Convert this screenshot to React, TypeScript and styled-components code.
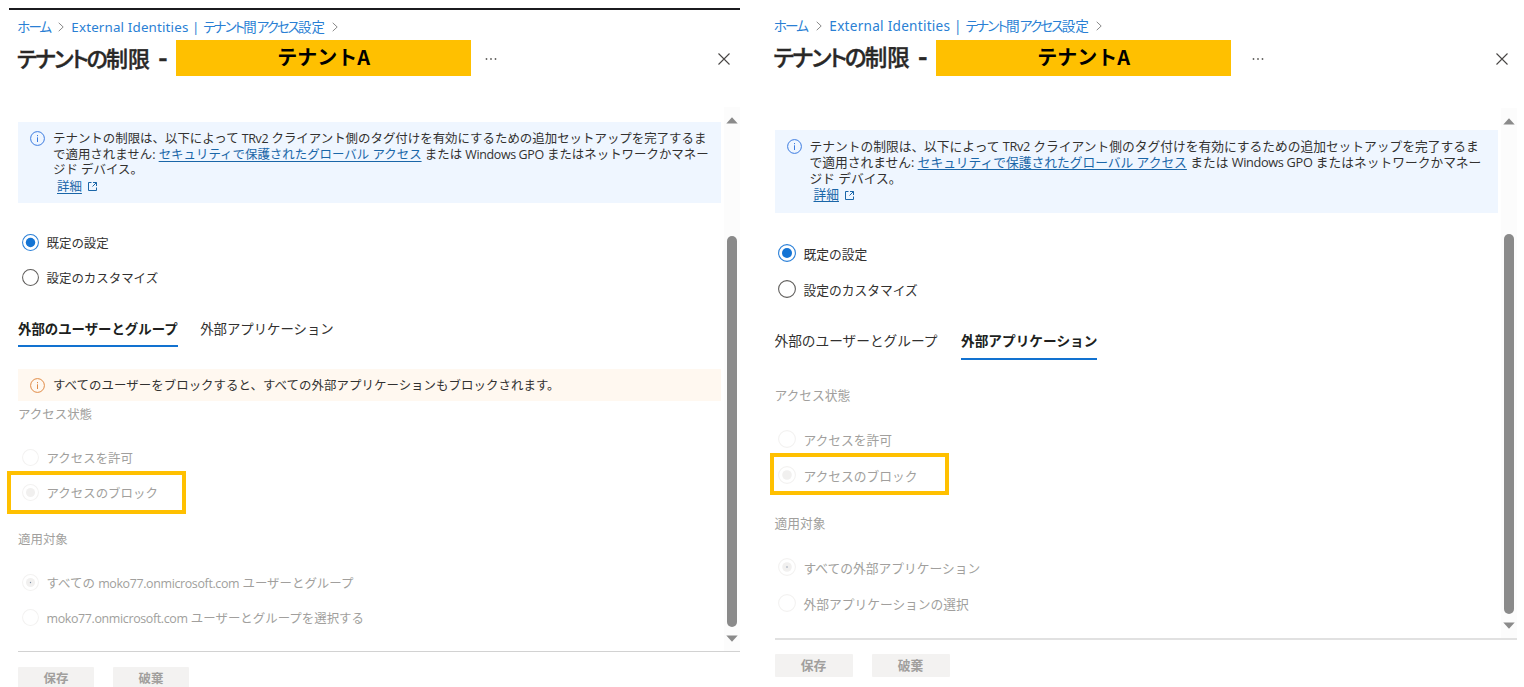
import React from "react";
import styled, { createGlobalStyle, ThemeProvider } from "styled-components";

const GlobalStyle = createGlobalStyle`
  * { box-sizing: border-box; }
  body {
    margin: 0;
    background: #fff;
    overflow: hidden;
    font-family: "Open Sans", "Noto Sans CJK JP", sans-serif;
    color: #323130;
  }
`;

interface PanelTheme {
  width: number;
  padLeft: number;
  padRight: number;
  text: number;
  textTop: number;
  labelTop: number;
  tab: number;
  tabGap: number;
  tabLine: number;
  crumb: number;
  crumbTop: number;
  crumbLatin: number;
  crumbKana: number;
  latin: number;
  radio: number;
  radioLeft: number;
  titleSize: number;
  titleTop: number;
  bannerLeft: number;
  moreGap: number;
  iconTop: number;
  scrollTop: number;
  scrollHeight: number;
  noticeTop: number;
  noticeHeight: number;
  noticeLine: number;
  thumbTop: number;
  thumbHeight: number;
  footerGap: number;
  buttonWidth: number;
  buttonHeight: number;
  buttonPad: number;
  ruleColor: string;
  ruleWidth: number;
}

declare module "styled-components" {
  export interface DefaultTheme extends PanelTheme {}
}

const leftTheme: PanelTheme = {
  width: 740, padLeft: 18, padRight: 0,
  text: 12.45, textTop: 4, labelTop: 1, tab: 13.4, tabGap: 22.5, tabLine: 26,
  crumb: 13.4, crumbTop: 17, crumbLatin: 0.15, crumbKana: -1.8,
  latin: -0.36, radio: 17, radioLeft: 3.5,
  titleSize: 22, titleTop: 3, bannerLeft: 158, moreGap: 14, iconTop: 1,
  scrollTop: 31, scrollHeight: 544, noticeTop: 15, noticeHeight: 81, noticeLine: 15.5,
  thumbTop: 129, thumbHeight: 391, footerGap: 15, buttonWidth: 76, buttonHeight: 24, buttonPad: 3,
  ruleColor: "#d2d2d2", ruleWidth: 1,
};

const rightTheme: PanelTheme = {
  width: 784, padLeft: 34.5, padRight: 7,
  text: 12.74, textTop: 1, labelTop: 0, tab: 13.68, tabGap: 23.5, tabLine: 24,
  crumb: 13.6, crumbTop: 16, crumbLatin: 0.26, crumbKana: -1.85,
  latin: -0.32, radio: 18, radioLeft: 3,
  titleSize: 22.5, titleTop: 4, bannerLeft: 161.5, moreGap: 21, iconTop: 1,
  scrollTop: 32, scrollHeight: 530, noticeTop: 22, noticeHeight: 83, noticeLine: 15.8,
  thumbTop: 126, thumbHeight: 380, footerGap: 14, buttonWidth: 78, buttonHeight: 23, buttonPad: 2,
  ruleColor: "#e1e1e1", ruleWidth: 2,
};

const Page = styled.main`
  display: flex;
  width: 1524px;
  height: 687px;
  overflow: hidden;
`;

const Panel = styled.section`
  position: relative;
  flex: none;
  display: flex;
  flex-direction: column;
  width: ${(p) => p.theme.width}px;
  height: 687px;
  padding-left: ${(p) => p.theme.padLeft}px;
  padding-right: ${(p) => p.theme.padRight}px;
  overflow: hidden;
`;

const TopRule = styled.div`
  position: absolute;
  top: 8px;
  left: 9px;
  right: 0;
  height: 2px;
  background: #1b1b1f;
`;

const Breadcrumb = styled.nav`
  flex: none;
  display: flex;
  align-items: center;
  height: 20px;
  margin-top: ${(p) => p.theme.crumbTop}px;
  margin-left: -0.7px;
  font: ${(p) => p.theme.crumb}px/20px "Noto Sans", "Noto Sans CJK JP", sans-serif;
  color: #2a7fd4;
  white-space: pre;
`;

const Crumb = styled.a<{ w: number }>`
  display: block;
  width: ${(p) => p.w}px;
  white-space: pre;
`;

const CrumbLatin = styled.span`
  letter-spacing: ${(p) => p.theme.crumbLatin}px;
`;

const CrumbKana = styled.span`
  letter-spacing: ${(p) => p.theme.crumbKana}px;
  font-feature-settings: "palt";
`;

const TitleKana = styled.span`
  letter-spacing: -1.95px;
  font-feature-settings: "palt";
`;

const TitleDash = styled.span`
  margin-left: 8.5px;
  font-size: 1.25em;
  font-weight: 600;
  line-height: 1;
`;

const ChevronIcon = styled.svg`
  flex: none;
  width: 6px;
  height: 10px;
  fill: none;
  stroke: #8a8a8a;
  stroke-width: 1;
`;

const TitleRow = styled.header`
  flex: none;
  display: flex;
  align-items: center;
  height: 36px;
  margin-top: ${(p) => p.theme.titleTop}px;
`;

const Title = styled.h1`
  flex: none;
  width: ${(p) => p.theme.bannerLeft}px;
  height: 36px;
  margin: 0;
  text-indent: -1px;
  font-size: ${(p) => p.theme.titleSize}px;
  line-height: 36px;
  font-weight: 500;
  -webkit-text-stroke: 0.4px #292827;
  color: #292827;
  white-space: pre;
`;

const TenantBanner = styled.div`
  flex: none;
  width: 295.4px;
  height: 36px;
  background: #ffc000;
  color: #000;
  text-align: center;
  font: 700 20px/34px "Noto Sans CJK JP", sans-serif;
`;

const MoreIcon = styled.svg`
  flex: none;
  width: 12px;
  height: 4px;
  margin-top: ${(p) => p.theme.iconTop * 2}px;
  margin-left: ${(p) => p.theme.moreGap}px;
  fill: #605e5c;
`;

const CloseIcon = styled.svg<{ inset: number }>`
  flex: none;
  width: 12px;
  height: 12px;
  margin-top: ${(p) => p.theme.iconTop * 2}px;
  margin-left: auto;
  margin-right: ${(p) => p.inset}px;
  fill: none;
  stroke: #484644;
  stroke-width: 1.1;
`;

const ScrollArea = styled.div`
  flex: none;
  display: flex;
  justify-content: space-between;
  height: ${(p) => p.theme.scrollHeight}px;
  margin-top: ${(p) => p.theme.scrollTop}px;
`;

const Content = styled.div`
  flex: 1;
  margin-right: 3px;
  font-size: ${(p) => p.theme.text}px;
`;

const Notice = styled.div`
  display: flex;
  height: ${(p) => p.theme.noticeHeight}px;
  margin-top: ${(p) => p.theme.noticeTop}px;
  padding: 9px 0 0 12px;
  background: #eff6ff;
`;

const Warning = styled.div`
  display: flex;
  align-items: center;
  height: 32px;
  margin-top: 22px;
  padding-left: 12px;
  background: #fff8f0;
  letter-spacing: 0.04px;
`;

const InfoIcon = styled.svg<{ tone: string }>`
  flex: none;
  width: 15px;
  height: 15px;
  margin-right: 8px;
  fill: none;
  stroke: ${(p) => p.tone};
`;

const Lines = styled.div`
  line-height: ${(p) => p.theme.noticeLine}px;
  white-space: pre;
`;

const Latin = styled.span`
  letter-spacing: ${(p) => p.theme.latin}px;
`;

const Link = styled.a`
  color: #1a66a8;
  text-decoration: underline;
  text-underline-offset: 2px;
`;

const DetailLine = styled.div`
  display: flex;
  align-items: center;
  margin: 1px 0 0 4px;
`;

const ExternalIcon = styled.svg`
  width: 11px;
  height: 11px;
  margin-left: 5px;
  fill: none;
  stroke: #1a66a8;
`;

const RadioRow = styled.label<{ gap: number; off?: boolean }>`
  display: flex;
  align-items: center;
  height: 20px;
  margin-top: ${(p) => p.gap}px;
  padding-left: ${(p) => p.theme.radioLeft}px;
  line-height: 20px;
  white-space: pre;
  color: ${(p) => (p.off ? "#a19f9d" : "#323130")};
`;

const RadioCircle = styled.svg`
  flex: none;
  width: ${(p) => p.theme.radio}px;
  height: ${(p) => p.theme.radio}px;
  margin-right: 8px;
`;

const RadioText = styled.span`
  padding-top: ${(p) => p.theme.textTop}px;
`;

const TabList = styled.div<{ gap: number }>`
  display: flex;
  gap: ${(p) => p.theme.tabGap}px;
  height: 31px;
  margin-top: ${(p) => p.gap}px;
  font-size: ${(p) => p.theme.tab}px;
`;

const Tab = styled.button<{ active?: boolean }>`
  display: flex;
  align-items: flex-start;
  padding: 0;
  border: 0;
  border-bottom: 2px solid ${(p) => (p.active ? "#1272d0" : "transparent")};
  background: none;
  font: inherit;
  font-weight: ${(p) => (p.active ? 700 : 400)};
  line-height: ${(p) => p.theme.tabLine}px;
  height: 31px;
  color: ${(p) => (p.active ? "#201f1e" : "#323130")};
  white-space: pre;
`;

const FieldLabel = styled.div<{ gap: number }>`
  height: 20px;
  margin-top: ${(p) => p.gap}px;
  padding-top: ${(p) => p.theme.labelTop}px;
  line-height: 20px;
  color: #a19f9d;
`;

const ScrollBar = styled.div`
  flex: none;
  display: flex;
  flex-direction: column;
  align-items: center;
  width: 16px;
  height: 100%;
  padding: 10px 0 9px;
  background: #fcfcfc;
`;

const Arrow = styled.svg`
  flex: none;
  width: 12px;
  height: 7px;
  fill: #8a8a8a;
`;

const Thumb = styled.div`
  flex: none;
  width: 9.5px;
  height: ${(p) => p.theme.thumbHeight}px;
  margin-top: ${(p) => p.theme.thumbTop - 17}px;
  margin-bottom: auto;
  border-radius: 5px;
  background: #8a8a8a;
`;

const Footer = styled.footer`
  flex: none;
  display: flex;
  gap: 19px;
  padding-top: ${(p) => p.theme.footerGap}px;
  border-top: ${(p) => p.theme.ruleWidth}px solid ${(p) => p.theme.ruleColor};
`;

const ActionButton = styled.button`
  flex: none;
  width: ${(p) => p.theme.buttonWidth}px;
  height: ${(p) => p.theme.buttonHeight}px;
  padding: 0 0 ${(p) => p.theme.buttonPad}px;
  border: 0;
  border-radius: 1px;
  background: #f3f2f1;
  color: #a19f9d;
  font: 700 ${(p) => p.theme.text}px/18px "Noto Sans CJK JP", sans-serif;
`;

const Highlight = styled.div<{ x: number; y: number; h: number }>`
  position: absolute;
  left: ${(p) => p.x}px;
  top: ${(p) => p.y}px;
  width: 179px;
  height: ${(p) => p.h}px;
  border: 4px solid #ffc000;
`;

function Chevron() {
  return (
    <ChevronIcon viewBox="0 0 6 10">
      <path d="M0.7 0.8 L5.2 5 L0.7 9.2" />
    </ChevronIcon>
  );
}

function Info({ tone }: { tone: string }) {
  return (
    <InfoIcon tone={tone} viewBox="0 0 15 15">
      <circle cx="7.5" cy="7.5" r="6.9" />
      <path d="M7.5 6.3 V11 M7.5 4 V5.2" />
    </InfoIcon>
  );
}

type RadioKind = "on" | "empty" | "offEmpty" | "offOn" | "offDot";

function Radio({ kind, gap, children }: { kind: RadioKind; gap: number; children: React.ReactNode }) {
  const ring = kind === "on" ? "#2b80d8" : kind === "empty" ? "#605e5c" : "#f3f2f1";
  return (
    <RadioRow gap={gap} off={kind.startsWith("off")}>
      <RadioCircle viewBox="0 0 18 18">
        <circle cx="9" cy="9" r="8.4" fill="none" stroke={ring} strokeWidth="1.1" />
        {kind === "on" && <circle cx="9" cy="9" r="5" fill="#1474d4" />}
        {(kind === "offOn" || kind === "offDot") && <circle cx="9" cy="9" r="4.8" fill="#f1f0ef" />}
        {kind === "offDot" && <circle cx="9" cy="9" r="0.7" fill="#7d8fa5" />}
      </RadioCircle>
      <RadioText>{children}</RadioText>
    </RadioRow>
  );
}

interface HeaderProps {
  homeWidth: number;
  pageWidth: number;
  closeInset: number;
}

const PageCrumb = styled(Crumb)`
  margin-left: 7.5px;
`;

function PanelHeader({ homeWidth, pageWidth, closeInset }: HeaderProps) {
  return (
    <>
      <Breadcrumb>
        <Crumb w={homeWidth}><CrumbKana>ホーム</CrumbKana></Crumb>
        <Chevron />
        <PageCrumb w={pageWidth}>
          <CrumbLatin>External Identities | </CrumbLatin><CrumbKana>テナント</CrumbKana>間<CrumbKana>アクセス</CrumbKana>設定
        </PageCrumb>
        <Chevron />
      </Breadcrumb>
      <TitleRow>
        <Title><TitleKana>テナントの</TitleKana>制限<TitleDash>-</TitleDash></Title>
        <TenantBanner>テナントA</TenantBanner>
        <MoreIcon viewBox="0 0 12 4">
          <circle cx="1.5" cy="2" r="0.9" />
          <circle cx="6" cy="2" r="0.9" />
          <circle cx="10.5" cy="2" r="0.9" />
        </MoreIcon>
        <CloseIcon inset={closeInset} viewBox="0 0 12 12">
          <path d="M0.5 0.5 L11.5 11.5 M11.5 0.5 L0.5 11.5" />
        </CloseIcon>
      </TitleRow>
    </>
  );
}

function SetupNotice() {
  return (
    <Notice>
      <Info tone="#3b7be0" />
      <Lines>
        <div>テナントの制限は、以下によって <Latin>TRv2</Latin> クライアント側のタグ付けを有効にするための追加セットアップを完了するま</div>
        <div>で適用されません: <Link>セキュリティで保護されたグローバル アクセス</Link> または <Latin>Windows GPO</Latin> またはネットワークかマネー</div>
        <div>ジド デバイス。</div>
        <DetailLine>
          <Link>詳細</Link>
          <ExternalIcon viewBox="0 0 11 11">
            <path d="M4.5 1.5 H1.5 V9.5 H9.5 V6.5 M6 1.5 H9.5 V5 M9.5 1.5 L5.5 5.5" />
          </ExternalIcon>
        </DetailLine>
      </Lines>
    </Notice>
  );
}

function Bar() {
  return (
    <ScrollBar>
      <Arrow viewBox="0 0 12 7"><path d="M6 0.3 L11.7 6.5 H0.3 Z" /></Arrow>
      <Thumb />
      <Arrow viewBox="0 0 12 7"><path d="M6 6.7 L11.7 0.5 H0.3 Z" /></Arrow>
    </ScrollBar>
  );
}

function Actions() {
  return (
    <Footer>
      <ActionButton>保存</ActionButton>
      <ActionButton>破棄</ActionButton>
    </Footer>
  );
}

export default function App() {
  return (
    <Page>
      <GlobalStyle />
      <ThemeProvider theme={leftTheme}>
        <Panel>
          <TopRule />
          <PanelHeader homeWidth={40.5} pageWidth={260.5} closeInset={10} />
          <ScrollArea>
            <Content>
              <SetupNotice />
              <Radio kind="on" gap={29}>既定の設定</Radio>
              <Radio kind="empty" gap={15}>設定のカスタマイズ</Radio>
              <TabList gap={29}>
                <Tab active>外部のユーザーとグループ</Tab>
                <Tab>外部アプリケーション</Tab>
              </TabList>
              <Warning>
                <Info tone="#e08a45" />
                すべてのユーザーをブロックすると、すべての外部アプリケーションもブロックされます。
              </Warning>
              <FieldLabel gap={3}>アクセス状態</FieldLabel>
              <Radio kind="offEmpty" gap={23}>アクセスを許可</Radio>
              <Radio kind="offOn" gap={15}>アクセスのブロック</Radio>
              <FieldLabel gap={27}>適用対象</FieldLabel>
              <Radio kind="offDot" gap={23}>すべての <Latin>moko77.onmicrosoft.com</Latin> ユーザーとグループ</Radio>
              <Radio kind="offEmpty" gap={15}><Latin>moko77.onmicrosoft.com</Latin> ユーザーとグループを選択する</Radio>
            </Content>
            <Bar />
          </ScrollArea>
          <Actions />
          <Highlight x={7} y={471} h={43} />
        </Panel>
      </ThemeProvider>
      <ThemeProvider theme={rightTheme}>
        <Panel>
          <PanelHeader homeWidth={42} pageWidth={266.5} closeInset={9.5} />
          <ScrollArea>
            <Content>
              <SetupNotice />
              <Radio kind="on" gap={30}>既定の設定</Radio>
              <Radio kind="empty" gap={16}>設定のカスタマイズ</Radio>
              <TabList gap={30}>
                <Tab>外部のユーザーとグループ</Tab>
                <Tab active>外部アプリケーション</Tab>
              </TabList>
              <FieldLabel gap={25}>アクセス状態</FieldLabel>
              <Radio kind="offEmpty" gap={24}>アクセスを許可</Radio>
              <Radio kind="offOn" gap={16}>アクセスのブロック</Radio>
              <FieldLabel gap={28}>適用対象</FieldLabel>
              <Radio kind="offDot" gap={24}>すべての外部アプリケーション</Radio>
              <Radio kind="offEmpty" gap={16}>外部アプリケーションの選択</Radio>
            </Content>
            <Bar />
          </ScrollArea>
          <Actions />
          <Highlight x={30} y={453} h={42} />
        </Panel>
      </ThemeProvider>
    </Page>
  );
}
